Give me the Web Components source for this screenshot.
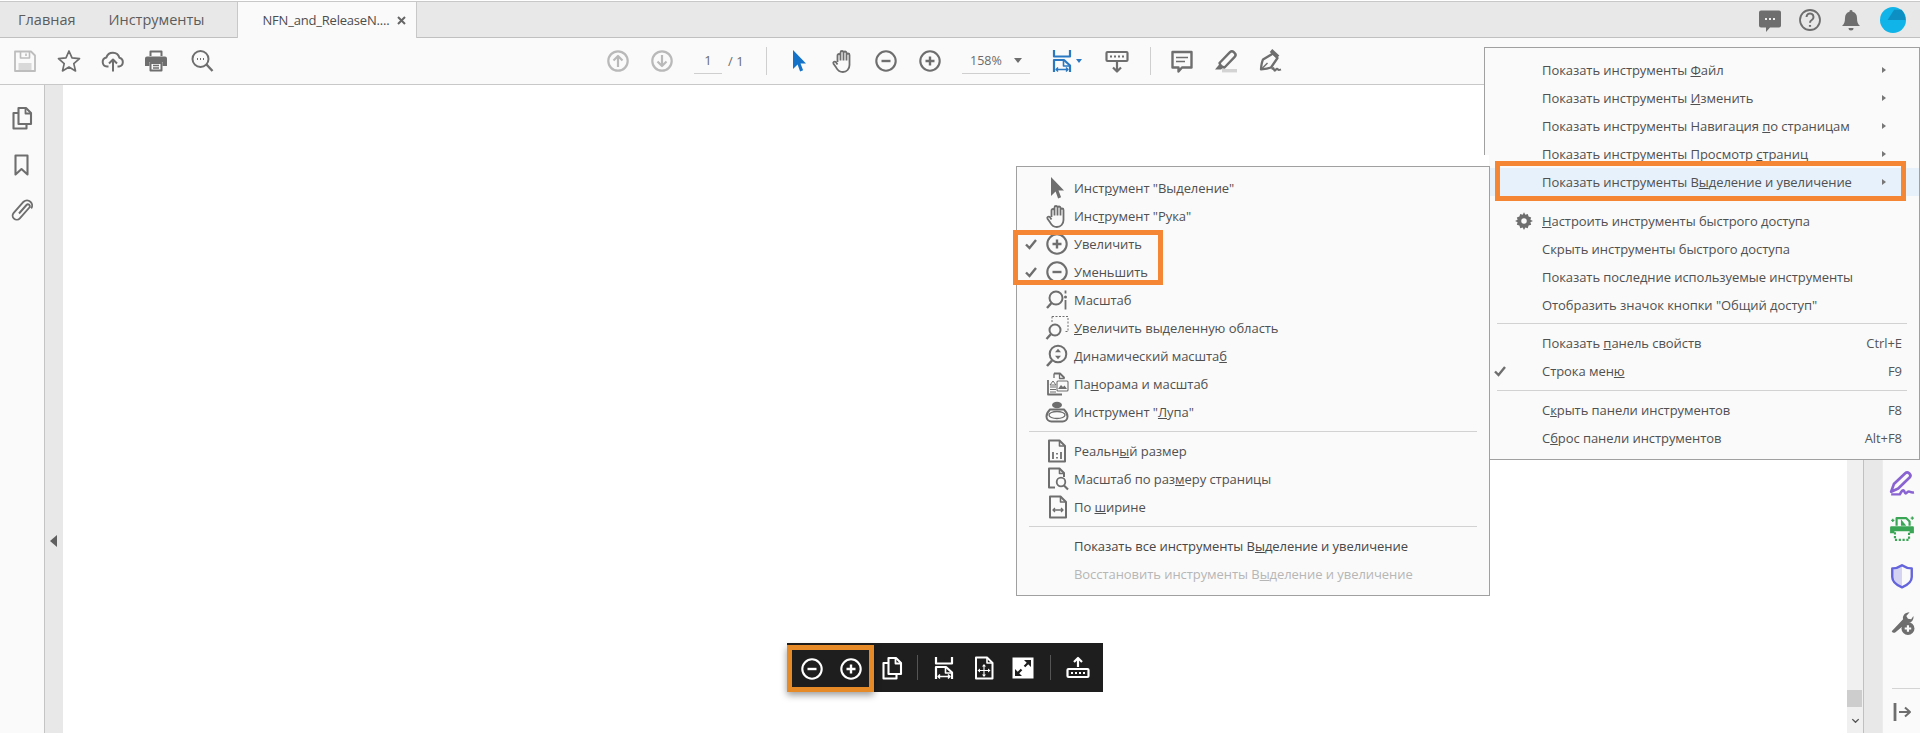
<!DOCTYPE html>
<html lang="ru">
<head>
<meta charset="utf-8">
<title>Reader</title>
<style>
html,body{margin:0;height:100%;background:#fff;overflow:hidden}
body{font-family:"Open Sans","Noto Sans","Liberation Sans",sans-serif;color:#505050}
</style>
</head>
<body>
<rd-app>
  <rd-tabbar slot="tabs">
    <rd-tab style="margin-left:18px">Главная</rd-tab>
    <rd-tab style="margin-left:33px">Инструменты</rd-tab>
    <rd-tab active closable style="margin-left:32px">NFN_and_ReleaseN....</rd-tab>
    <rd-icon name="chat" size="24" style="margin-left:auto"></rd-icon>
    <rd-icon name="help" size="24" style="margin-left:16px"></rd-icon>
    <rd-icon name="bell" size="24" style="margin-left:17px"></rd-icon>
    <rd-icon name="avatar" size="26" style="margin-left:17px;margin-right:14px"></rd-icon>
  </rd-tabbar>
  <rd-toolbar slot="tools">
    <rd-icon name="save" style="margin-left:13px;color:#bdbdbd"></rd-icon>
    <rd-icon name="star" style="margin-left:20px"></rd-icon>
    <rd-icon name="cloud" style="margin-left:20px"></rd-icon>
    <rd-icon name="print" style="margin-left:19px"></rd-icon>
    <rd-icon name="search" style="margin-left:22px"></rd-icon>
    <rd-icon name="up" style="margin-left:392px;color:#b9b9b9"></rd-icon>
    <rd-icon name="down" style="margin-left:20px;color:#b9b9b9"></rd-icon>
    <rd-field style="margin-left:20px;width:28px">1</rd-field>
    <rd-label style="margin-left:6px;width:17px">/ 1</rd-label>
    <rd-vsep style="margin-left:21px"></rd-vsep>
    <rd-icon name="cursor" style="margin-left:20px;color:#1473c8"></rd-icon>
    <rd-icon name="hand" style="margin-left:20px"></rd-icon>
    <rd-icon name="minus" style="margin-left:19px"></rd-icon>
    <rd-icon name="plus" style="margin-left:20px"></rd-icon>
    <rd-field caret style="margin-left:20px;width:68px;font-size:12.5px">158%</rd-field>
    <rd-icon name="fit" style="margin-left:20px;color:#2b78c2"></rd-icon>
    <rd-caret style="margin-left:2px;color:#2b78c2"></rd-caret>
    <rd-icon name="kbdown" style="margin-left:23px"></rd-icon>
    <rd-vsep style="margin-left:21px"></rd-vsep>
    <rd-icon name="comment" style="margin-left:19px"></rd-icon>
    <rd-icon name="marker" style="margin-left:20px"></rd-icon>
    <rd-icon name="pen" style="margin-left:20px"></rd-icon>
  </rd-toolbar>
  <rd-leftpanel slot="left">
    <rd-icon name="pages" style="margin-top:21px"></rd-icon>
    <rd-icon name="bookmark" style="margin-top:23px"></rd-icon>
    <rd-icon name="clip" style="margin-top:21px"></rd-icon>
  </rd-leftpanel>
  <rd-rightpanel slot="right">
    <rd-icon name="sign" size="26" style="color:#8a63d2"></rd-icon>
    <rd-icon name="scan" size="26" style="color:#3aa655"></rd-icon>
    <rd-icon name="shield" size="26" style="color:#6464dc"></rd-icon>
    <rd-icon name="wrench" size="26"></rd-icon>
  </rd-rightpanel>

  <rd-floatbar slot="overlay">
    <rd-mark>
      <rd-icon name="minus" style="margin-left:8px"></rd-icon>
      <rd-icon name="plus" style="margin-left:15px"></rd-icon>
    </rd-mark>
    <rd-icon name="pages" style="margin-left:6px"></rd-icon>
    <rd-vsep dark style="margin-left:13px"></rd-vsep>
    <rd-icon name="fit" style="margin-left:14px"></rd-icon>
    <rd-icon name="move" style="margin-left:16px"></rd-icon>
    <rd-icon name="expand" style="margin-left:15px"></rd-icon>
    <rd-vsep dark style="margin-left:15px"></rd-vsep>
    <rd-icon name="kbup" style="margin-left:15px"></rd-icon>
  </rd-floatbar>

  <rd-menu slot="overlay" kind="main">
    <rd-item lift arrow>Показать инструменты <u>Ф</u>айл</rd-item>
    <rd-item lift arrow>Показать инструменты <u>И</u>зменить</rd-item>
    <rd-item lift arrow>Показать инструменты Навигация <u>п</u>о страницам</rd-item>
    <rd-item lift arrow>Показать инструменты Просмотр <u>с</u>траниц</rd-item>
    <rd-item lift arrow selected>Показать инструменты В<u>ы</u>деление и увеличение</rd-item>
    <rd-item lift icon="gear" style="margin-top:11px"><u>Н</u>астроить инструменты быстрого доступа</rd-item>
    <rd-item lift>Скрыть инструменты быстрого доступа</rd-item>
    <rd-item lift>Показать последние используемые инструменты</rd-item>
    <rd-item lift>Отобразить значок кнопки "Общий доступ"</rd-item>
    <rd-sep></rd-sep>
    <rd-item key="Ctrl+E">Показать <u>п</u>анель свойств</rd-item>
    <rd-item check key="F9">Строка мен<u>ю</u></rd-item>
    <rd-sep style="margin-top:5px"></rd-sep>
    <rd-item key="F8">С<u>к</u>рыть панели инструментов</rd-item>
    <rd-item key="Alt+F8">С<u>б</u>рос панели инструментов</rd-item>
  </rd-menu>

  <rd-menu slot="overlay" kind="sub">
    <rd-item icon="cursor">Инст<u>р</u>умент "Выделение"</rd-item>
    <rd-item icon="hand">Инс<u>т</u>румент "Рука"</rd-item>
    <rd-item check icon="plus">Увеличить</rd-item>
    <rd-item check icon="minus">Уменьшить</rd-item>
    <rd-item icon="zoomdots">Масштаб</rd-item>
    <rd-item icon="marquee"><u>У</u>величить выделенную область</rd-item>
    <rd-item icon="dynamic">Динамический масшта<u>б</u></rd-item>
    <rd-item icon="panzoom">Па<u>н</u>орама и масштаб</rd-item>
    <rd-item icon="loupe">Инструмент "<u>Л</u>упа"</rd-item>
    <rd-sep style="margin-top:5px"></rd-sep>
    <rd-item icon="actual">Реальн<u>ы</u>й размер</rd-item>
    <rd-item icon="fitpage">Масштаб по раз<u>м</u>еру страницы</rd-item>
    <rd-item icon="fitwidth">По <u>ш</u>ирине</rd-item>
    <rd-sep style="margin:5px 12px 5px"></rd-sep>
    <rd-item strong>Показать все инструменты В<u>ы</u>деление и увеличение</rd-item>
    <rd-item disabled>Восстановить инструменты В<u>ы</u>деление и увеличение</rd-item>
  </rd-menu>

  <rd-outline slot="overlay" style="left:1495px;top:161px;width:411px;height:40px"></rd-outline>
  <rd-outline slot="overlay" style="left:1013px;top:230px;width:150px;height:55px"></rd-outline>
</rd-app>

<script>
const ICONS = {
  save:`<path d="M2 2.500h16l4 4V22H2z" stroke-width="1.800"/><path d="M7.500 2.500v6.500h9V2.500M13 4.500v2.500" stroke-width="1.600"/><path d="M5.500 22v-8h13v8z" fill="currentColor" opacity=".55" stroke="none"/>`,
  star:`<path d="M12 2l3 6.900 7.500.7-5.700 5 1.700 7.300-6.500-3.900-6.500 3.900 1.700-7.300-5.700-5 7.500-.7z" stroke-width="1.700"/>`,
  cloud:`<path d="M7.500 17.500H6a4.600 4.600 0 0 1-.6-9.100 6.800 6.800 0 0 1 13 .3 4.500 4.500 0 0 1-.3 8.800h-1.600" stroke-width="2"/><path d="M12 22.500V10.500M8 14.500l4-4 4 4" stroke-width="2"/>`,
  print:`<path d="M6.500 7V2.600h11V7" stroke-width="2"/><path d="M3 7.500h18a2 2 0 0 1 2 2V17h-4.500v-4h-13v4H1V9.500a2 2 0 0 1 2-2z" fill="currentColor" stroke="none"/><path d="M6.500 14h11v7.500h-11z" stroke-width="2"/><path d="M9 16.500h6M9 19h6" stroke-width="1.300"/>`,
  search:`<circle cx="10.500" cy="10" r="8" stroke-width="2"/><path d="M16.500 15.500l6 6.500" stroke-width="2.400"/><path d="M7 10h1M10 10h1M13 10h1" stroke-width="1.800"/>`,
  up:`<circle cx="12" cy="12" r="9.700" stroke-width="2.200"/><path d="M12 18V7M7.500 11.500L12 7l4.500 4.500" stroke-width="2.200"/>`,
  down:`<circle cx="12" cy="12" r="9.700" stroke-width="2.200"/><path d="M12 6v11M7.500 12.500L12 17l4.500-4.500" stroke-width="2.200"/>`,
  cursor:`<path d="M6 1l13 13.500h-5.500l2.600 6.700-3 1.300-2.500-7L6 20z" fill="currentColor" stroke="none"/>`,
  hand:`<path d="M6.500 13V6.500a1.500 1.500 0 0 1 3 0V11.500M9.500 11.500V3.500a1.500 1.500 0 0 1 3 0v8M12.500 11.500V4a1.500 1.500 0 0 1 3 0v7.500M15.500 11.500V6a1.500 1.500 0 0 1 3 0v10c0 4-2.800 7-6.600 7-3.500 0-5.200-1.600-6.700-4.400L2.500 14.800c-.9-1.800 1.400-3 2.500-1.500L6.500 15.500" stroke-width="1.800"/>`,
  minus:`<circle cx="12" cy="12" r="9.700" stroke-width="2.100"/><path d="M7.500 12h9" stroke-width="2.400"/>`,
  plus:`<circle cx="12" cy="12" r="9.700" stroke-width="2.100"/><path d="M7.500 12h9M12 7.500v9" stroke-width="2.400"/>`,
  fit:`<path d="M4 1v6.500h16V1" stroke-width="2.200"/><path d="M4 23V11h10l6 5.500V23" stroke-width="2.200"/><path d="M13.500 11v6H20" stroke-width="1.600"/><path d="M6 20.500h12M8 18.500l-2 2 2 2M16 18.500l2 2-2 2" stroke-width="1.400"/>`,
  kbdown:`<rect x="1.500" y="3" width="21" height="9" rx="1" stroke-width="2.200"/><path d="M5 7.500h2M9 7.500h2M13 7.500h2M17 7.500h2" stroke-width="1.800"/><path d="M12 13v9M8 18.500l4 4 4-4" stroke-width="2.200"/>`,
  comment:`<path d="M2.500 3h19v15.500H12l-3.500 4v-4h-6z" stroke-width="2.400"/><path d="M6 8.500h12M6 12.500h9" stroke-width="1.500"/>`,
  marker:`<path d="M7 17.500l-1.500-3.500L16 3.200a2.700 2.700 0 0 1 3.800 0l.9.9a2.700 2.700 0 0 1 0 3.800L10.500 18.500z" stroke-width="2.400"/><path d="M6 14.500L1 20.500h6l3-2.500z" fill="currentColor" stroke="none"/><path d="M8 21.700h15" stroke-width="3.400" opacity=".28"/>`,
  pen:`<path d="M15 4.500L19.500 9 13 18.500c-2.500 1-5.500 1.500-10 1.800.3-4.300.8-7.300 2-9.800z" stroke-width="2.300"/><path d="M13 1.500l7 6.500" stroke-width="3.800"/><path d="M3.500 20l6-6" stroke-width="1.500"/><path d="M14 20.500c1-2 1.500-2 2 0s1.500 1 2 0 1.500-1 2 0 1.500.5 3 0" stroke-width="2"/>`,
  chat:`<path d="M3 2.500h18a2 2 0 0 1 2 2v13a2 2 0 0 1-2 2H12l-4 4.500v-4.500H3a2 2 0 0 1-2-2v-13a2 2 0 0 1 2-2z" fill="currentColor" stroke="none"/><path d="M7 11h2M11 11h2M15 11h2" stroke="#eee" stroke-width="2"/>`,
  help:`<circle cx="12" cy="12" r="10" stroke-width="1.800"/><path d="M8.500 9a3.500 3.500 0 1 1 5.300 3c-1.200.7-1.800 1.500-1.800 2.800" stroke-width="2"/><path d="M12 17v1.800" stroke-width="2.200"/>`,
  bell:`<path d="M12 2a1.500 1.500 0 0 1 1.500 1.800C16.500 4.500 18 7 18 10c0 4 .8 6 3 8H3c2.200-2 3-4 3-8 0-3 1.500-5.500 4.500-6.200A1.500 1.500 0 0 1 12 2z" fill="currentColor" stroke="none"/><path d="M9.500 20h5a2.500 2.500 0 0 1-5 0z" fill="currentColor" stroke="none"/>`,
  avatar:`<circle cx="12" cy="12" r="12" fill="#10b4e8" stroke="none"/><path d="M13 2.500h7c2 2.500 3.500 5.500 3.500 9.500H7z" fill="#0d8fc4" stroke="none"/>`,
  pages:`<path d="M8.500 7H3.500v15.500h13V18" stroke-width="2.100"/><path d="M8.500 2h7.500l5 5v11H8.500z" stroke-width="2.100"/><path d="M15.500 2v5.500H21" stroke-width="1.800"/>`,
  bookmark:`<path d="M5.500 2.500h12v19l-6-5.500-6 5.500z" stroke-width="2.100"/>`,
  clip:`<path d="M9 15.500l7.500-8.500a1.900 1.900 0 0 1 2.900 2.500L9.800 20.300a4.100 4.100 0 0 1-6.100-5.500L13.600 3.700a5.100 5.100 0 0 1 7.600 6.700" stroke-width="1.900"/>`,
  sign:`<path d="M2 20l2.500-7L15 3a2.500 2.500 0 0 1 3.500 0l.5.5a2.500 2.500 0 0 1 0 3.500L8.500 17z" stroke-width="2.500"/><path d="M2 22.500h8c1.500-3 3-5 4-3s1 3 3 1 2.500 1 6 0" stroke-width="2.300"/>`,
  scan:`<path d="M7 9V2h9l3 3v4" stroke-width="2"/><path d="M11 3l5 6h-5z" fill="currentColor" stroke="none"/><path d="M2 9.500h20a1 1 0 0 1 1 1V16h-4v-2H5v2H1v-5.500a1 1 0 0 1 1-1z" fill="currentColor" stroke="none"/><path d="M5.500 15v7h13v-7" stroke-width="2" stroke-dasharray="2 1.500"/><path d="M2 4h3M3.500 2.500v3M20 2h3M21.500.5v3" stroke-width="1.200"/>`,
  shield:`<path d="M12 2c3 2 6 3 9 3v8c0 4-4 7.500-9 9.500C7 20.500 3 17 3 13V5c3 0 6-1 9-3z" stroke-width="2.200"/><path d="M12 2c-3 2-6 3-9 3v8c0 4 4 7.500 9 9.500z" fill="currentColor" opacity=".25" stroke="none"/>`,
  wrench:`<path d="M2.500 20.500L13 9.500c-.8-3 1.500-6.500 6-6.500l-3 3.500 1.500 2.500 3 .5 2-3c.7 4-2.500 7-6 6.200L6 21.500a2.500 2.500 0 0 1-3.500-1z" fill="currentColor" stroke="none"/><circle cx="17.500" cy="18" r="6" fill="currentColor" stroke="none"/><path d="M14.500 18h6M17.500 15v6" stroke="#fafafa" stroke-width="2"/>`,
  collapse:`<path d="M5 3v18" stroke-width="2.800"/><path d="M9 12h11M15 7.500l5 4.500-5 4.500" stroke-width="2"/>`,
  gear:`<path d="M12 1.500l1.600 3 2.900-.9 1 3.100 3.100 1-.9 2.900 3 1.400-3 1.600.9 2.900-3.100 1-1 3.100-2.900-.9-1.600 3-1.600-3-2.900.9-1-3.100-3.100-1 .9-2.900-3-1.600 3-1.400-.9-2.900 3.100-1 1-3.100 2.900.9z" fill="currentColor" stroke="none"/><circle cx="12" cy="12" r="3.300" fill="#fafafa" stroke="none"/>`,
  zoomdots:`<circle cx="11" cy="10" r="6.500" stroke-width="2"/><path d="M6.500 15L2 20" stroke-width="2.400"/><path d="M20.500 2.500v3M20.500 12v9.500" stroke-width="1.800"/><circle cx="20.500" cy="9" r="1.500" fill="currentColor" stroke="none"/>`,
  marquee:`<path d="M7 .5h16v15h-3" stroke-width="1" stroke-dasharray="2 1.500"/><path d="M7 .5v6" stroke-width="1" stroke-dasharray="2 1.500"/><circle cx="10" cy="14" r="5.500" stroke-width="2"/><path d="M6 18l-4.500 5" stroke-width="2.400"/>`,
  dynamic:`<circle cx="13" cy="10" r="8.300" stroke-width="2"/><path d="M7 16.500L2 22" stroke-width="2.600"/><path d="M13 4.800l3 3.500h-6zM13 15.200l3-3.500h-6z" fill="currentColor" stroke="none"/>`,
  panzoom:`<path d="M9 1.500h6l4 4v1M3 8v14.500h14" stroke-width="1.800"/><path d="M9 1.500V6M14.500 1.500v5h5" stroke-width="1.300"/><path d="M5 13l3-4 3 4zM5 15h6M5 17.500h6M5 20h6" stroke-width="1"/><rect x="12" y="9" width="11" height="10" rx="1" stroke-width="1.100"/><path d="M13 17l3-4 2 2 1.500-1.500 2.500 3.500z" fill="currentColor" stroke="none"/>`,
  loupe:`<ellipse cx="12" cy="5" rx="5" ry="3.200" fill="currentColor" stroke="none"/><path d="M5 9.500h14c2 2 3.500 4.500 3.500 7a5 5 0 0 1-5 5h-11a5 5 0 0 1-5-5c0-2.500 1.500-5 3.500-7z" stroke-width="2"/><ellipse cx="12" cy="15" rx="8" ry="3.500" stroke-width="1.300"/>`,
  actual:`<path d="M4 1.500h10.500L20 7v15.500H4z" stroke-width="2"/><path d="M14.500 1.500V7H20" stroke-width="1.600"/><path d="M8 13v7M16 13v7" stroke-width="1.800"/><path d="M12 14v1.500M12 18v1.500" stroke-width="1.800"/>`,
  fitpage:`<path d="M10 20.500H4v-19h10.500L19 6v4" stroke-width="2"/><path d="M14.500 1.500V6.500H19" stroke-width="1.600"/><circle cx="16" cy="15" r="4.300" stroke-width="1.800"/><path d="M19 18.500l4 4" stroke-width="2.200"/>`,
  fitwidth:`<path d="M5 1.500h10.500L21 7v15.500H5z" stroke-width="2"/><path d="M15.500 1.500V7H21" stroke-width="1.600"/><path d="M8 15h10M10 13l-2 2 2 2M16 13l2 2-2 2" stroke-width="1.300"/>`,
  move:`<path d="M4 1.500h11l5.500 5.500v15.500H4z" stroke-width="2"/><path d="M15 1.500V7h5.500" stroke-width="1.600"/><path d="M12 9v11M6.500 14.500h11" stroke-width="1.100"/><path d="M12 8l2 2.500h-4zM12 21l2-2.500h-4zM5.500 14.500L8 12.500v4zM18.500 14.500L16 12.500v4z" fill="currentColor" stroke="none"/>`,
  expand:`<rect x="1.500" y="1.500" width="21" height="21" fill="currentColor" stroke="none"/><path d="M5 19l5.500-5.500M19 5l-5.500 5.500" stroke="#1e1e1e" stroke-width="2.200"/><path d="M4 13v7h7zM20 11V4h-7z" fill="#1e1e1e" stroke="none"/>`,
  kbup:`<rect x="1.500" y="13" width="21" height="8" rx="1" stroke-width="2.200"/><path d="M5 17h2M9 17h2M13 17h2M17 17h2" stroke-width="1.800"/><path d="M12 11V2M8 6l4-4 4 4" stroke-width="2.200"/>`,
  chevron:`<path d="M5 9l7 7 7-7" stroke-width="3"/>`
};

function define(tag, css, html, extra) {
  customElements.define(tag, class extends HTMLElement {
    constructor(){ super(); this.attachShadow({mode:'open'}).innerHTML = `<style>${css}</style>${html}`; }
    connectedCallback(){ if (extra) extra(this); }
  });
}

define('rd-icon', `:host{display:inline-flex;flex:none;color:inherit;line-height:0}svg{display:block;overflow:visible}`, ``, el => {
  const size = el.getAttribute('size') || 24;
  const box = document.createElement('span');
  box.style.display = 'block';
  box.innerHTML = `<svg xmlns="http://www.w3.org/2000/svg" width="${size}" height="${size}" viewBox="0 0 24 24" fill="none" stroke="currentColor" stroke-linejoin="round">${ICONS[el.getAttribute('name')] || ''}</svg>`;
  el.shadowRoot.appendChild(box);
});

define('rd-app', `
  :host{display:flex;flex-direction:column;position:relative;height:733px;width:1920px;overflow:hidden;background:#fff}
  .main{display:flex;flex:1;min-height:0}
  .gutter{width:18px;background:#e8e8e8;flex:none}
  .gutter.l{padding-top:450px;box-sizing:border-box}
  .tri{width:0;height:0;border:6px solid transparent;border-right:7px solid #5f5f5f;border-left:0;margin-left:5px}
  .page{flex:1;background:#fff}
  .scroll{width:16px;box-sizing:content-box;background:#f0f0f0;border-right:1px solid #c0c0c0;display:flex;flex-direction:column;justify-content:flex-end;flex:none}
  .thumb{height:17px;width:15px;background:#cdcdcd}
  .down{height:26px;display:flex;align-items:center;justify-content:center;color:#555}
`, `
  <slot name="tabs"></slot>
  <slot name="tools"></slot>
  <div class="main">
    <slot name="left"></slot>
    <div class="gutter l"><div class="tri"></div></div>
    <div class="page"></div>
    <div class="scroll"><div class="thumb"></div><div class="down"><rd-icon name="chevron" size="11"></rd-icon></div></div>
    <div class="gutter"></div>
    <slot name="right"></slot>
  </div>
  <slot name="overlay"></slot>
`);

define('rd-tabbar', `
  :host{display:flex;align-items:center;height:35px;box-sizing:content-box;background:#e8e8e8;border-top:1px solid #c8c8c8;border-bottom:1px solid #c0c0c0;margin-top:1px;color:#6e6e6e;font-size:14.5px}
`, `<slot></slot>`);

define('rd-tab', `
  :host{display:flex;align-items:center;align-self:stretch;color:#5c5c5c;white-space:nowrap}
  :host([active]){background:#fafafa;border:solid #c8c8c8;border-width:0 1px;margin-bottom:-1px;width:180px;flex:none;box-sizing:border-box;padding-left:25px;color:#4d4d4d;font-size:13px;letter-spacing:-.2px}
  .x{display:none;margin-left:8px;width:9px;height:9px;color:#666}
  :host([closable]) .x{display:block}
  svg{display:block}
`, `<slot></slot><span class="x"><svg width="9" height="9" viewBox="0 0 9 9"><path d="M1 1l7 7M8 1L1 8" stroke="currentColor" stroke-width="2"/></svg></span>`);

define('rd-toolbar', `
  :host{display:flex;align-items:center;height:46px;background:#fafafa;border-bottom:1px solid #c8c8c8;color:#6e6e6e;font-size:13px}
`, `<slot></slot>`);

define('rd-field', `
  :host{display:flex;align-items:center;justify-content:center;align-self:flex-start;box-sizing:border-box;height:36px;padding-top:9px;border-bottom:1px solid #cfcfcf;color:#6a6a6a;flex:none}
  :host([caret]){justify-content:flex-start;padding-left:8px}
  .c{display:none;margin-left:auto;margin-right:8px;width:0;height:0;border:4px solid transparent;border-top:5px solid #6e6e6e;border-bottom:0}
  :host([caret]) .c{display:block}
`, `<slot></slot><span class="c"></span>`);

define('rd-label', `:host{display:block;flex:none;color:#6a6a6a;white-space:nowrap}`, `<slot></slot>`);

define('rd-caret', `:host{display:block;flex:none;width:0;height:0;border:3.500px solid transparent;border-top:4px solid currentColor;border-bottom:0}`, ``);

define('rd-vsep', `
  :host{display:block;flex:none;width:1px;height:28px;background:#cfcfcf}
  :host([dark]){background:#555;height:25px}
`, ``);

define('rd-leftpanel', `
  :host{display:flex;flex-direction:column;align-items:center;width:44px;flex:none;background:#fafafa;border-right:1px solid #c4c4c4;color:#6e6e6e}
`, `<slot></slot>`);

define('rd-rightpanel', `
  :host{display:flex;flex-direction:column;align-items:center;justify-content:flex-end;width:38px;flex:none;box-sizing:border-box;background:#fafafa;border-left:1px solid #ececec;color:#6e6e6e;padding-bottom:9px}
  .tools{display:flex;flex-direction:column;gap:20.500px;align-items:center}
  .sep{align-self:stretch;margin:53px 0 11px 9px;height:1px;background:#d4d4d4}
  .bottom{color:#6e6e6e}
`, `<div class="tools"><slot></slot></div><div class="sep"></div><rd-icon class="bottom" name="collapse"></rd-icon>`);

define('rd-floatbar', `
  :host{position:absolute;left:787px;top:643px;width:316px;height:49px;background:#1e1e1e;color:#fff;display:flex;align-items:center;box-sizing:border-box}
`, `<slot></slot>`);

define('rd-mark', `
  :host{display:flex;align-items:center;align-self:flex-end;box-sizing:border-box;width:87px;height:47px;border:5px solid #e58a26;box-shadow:0 3px 7px rgba(0,0,0,.4);flex:none}
`, `<slot></slot>`);

define('rd-outline', `:host{position:absolute;box-sizing:border-box;border:5px solid #f58634;z-index:5;pointer-events:none}`, ``);

define('rd-menu', `
  :host{position:absolute;box-sizing:border-box;background:#fafafa;border:1px solid #a0a0a0;color:#505050;font-size:13px;letter-spacing:-.06px;display:block}
  :host([kind=main]){right:0;top:47px;width:436px;height:413px;padding-top:8px;--check:29px;--icon:28px;--end:17px;z-index:1}
  :host([kind=sub]){left:1016px;top:166px;width:474px;height:430px;padding-top:7px;--check:28px;--icon:29px;--end:12px;z-index:2}
  .patch{display:none}
  :host([kind=main]) .patch{display:block;position:absolute;left:-1px;top:107px;width:5px;height:12px;background:#fff}
`, `<div class="patch"></div><slot></slot>`);

define('rd-sep', `:host{display:block;height:1px;background:#d2d2d2;margin:4px 12px 5px}`, ``);

define('rd-item', `
  :host{display:grid;grid-template-columns:var(--check) var(--icon) 1fr auto var(--end);grid-template-rows:28px;align-items:center;height:28px;white-space:nowrap;color:#505050}
  :host([selected]){background:#e6f1fb}
  :host([strong]){color:#474747}
  :host([disabled]){color:#b6b6b6}
  :host([lift]) .t{padding-bottom:1px}
  .c{grid-column:1;grid-row:1;visibility:hidden;justify-self:center;color:#6e6e6e}
  :host([check]) .c{visibility:visible}
  .c svg{display:block}
  .i{grid-column:2;grid-row:1;justify-self:start;display:block}
  .t{grid-column:3;grid-row:1}
  .k{grid-column:4;grid-row:1;color:#555}
  .a{grid-column:4;grid-row:1;display:none;justify-self:end;width:0;height:0;border:3.500px solid transparent;border-left:4.500px solid #777;border-right:0;margin-right:16px}
  :host([arrow]) .a{display:block}
`, `<span class="c"><svg width="12" height="12" viewBox="0 0 12 12" fill="none" stroke="currentColor"><path d="M1 6.500L4.500 10 11 2" stroke-width="2.400"/></svg></span><span class="i"></span><span class="t"><slot></slot></span><span class="k"></span><span class="a"></span>`, el => {
  const name = el.getAttribute('icon');
  const i = el.shadowRoot.querySelector('.i');
  if (name && !i.firstChild) {
    const ic = document.createElement('rd-icon');
    ic.setAttribute('name', name);
    ic.setAttribute('size', name === 'gear' ? 20 : 24);
    ic.style.color = '#6e6e6e';
    ic.style.display = 'block';
    i.appendChild(ic);
  }
  el.shadowRoot.querySelector('.k').textContent = el.getAttribute('key') || '';
});
</script>
</body>
</html>
